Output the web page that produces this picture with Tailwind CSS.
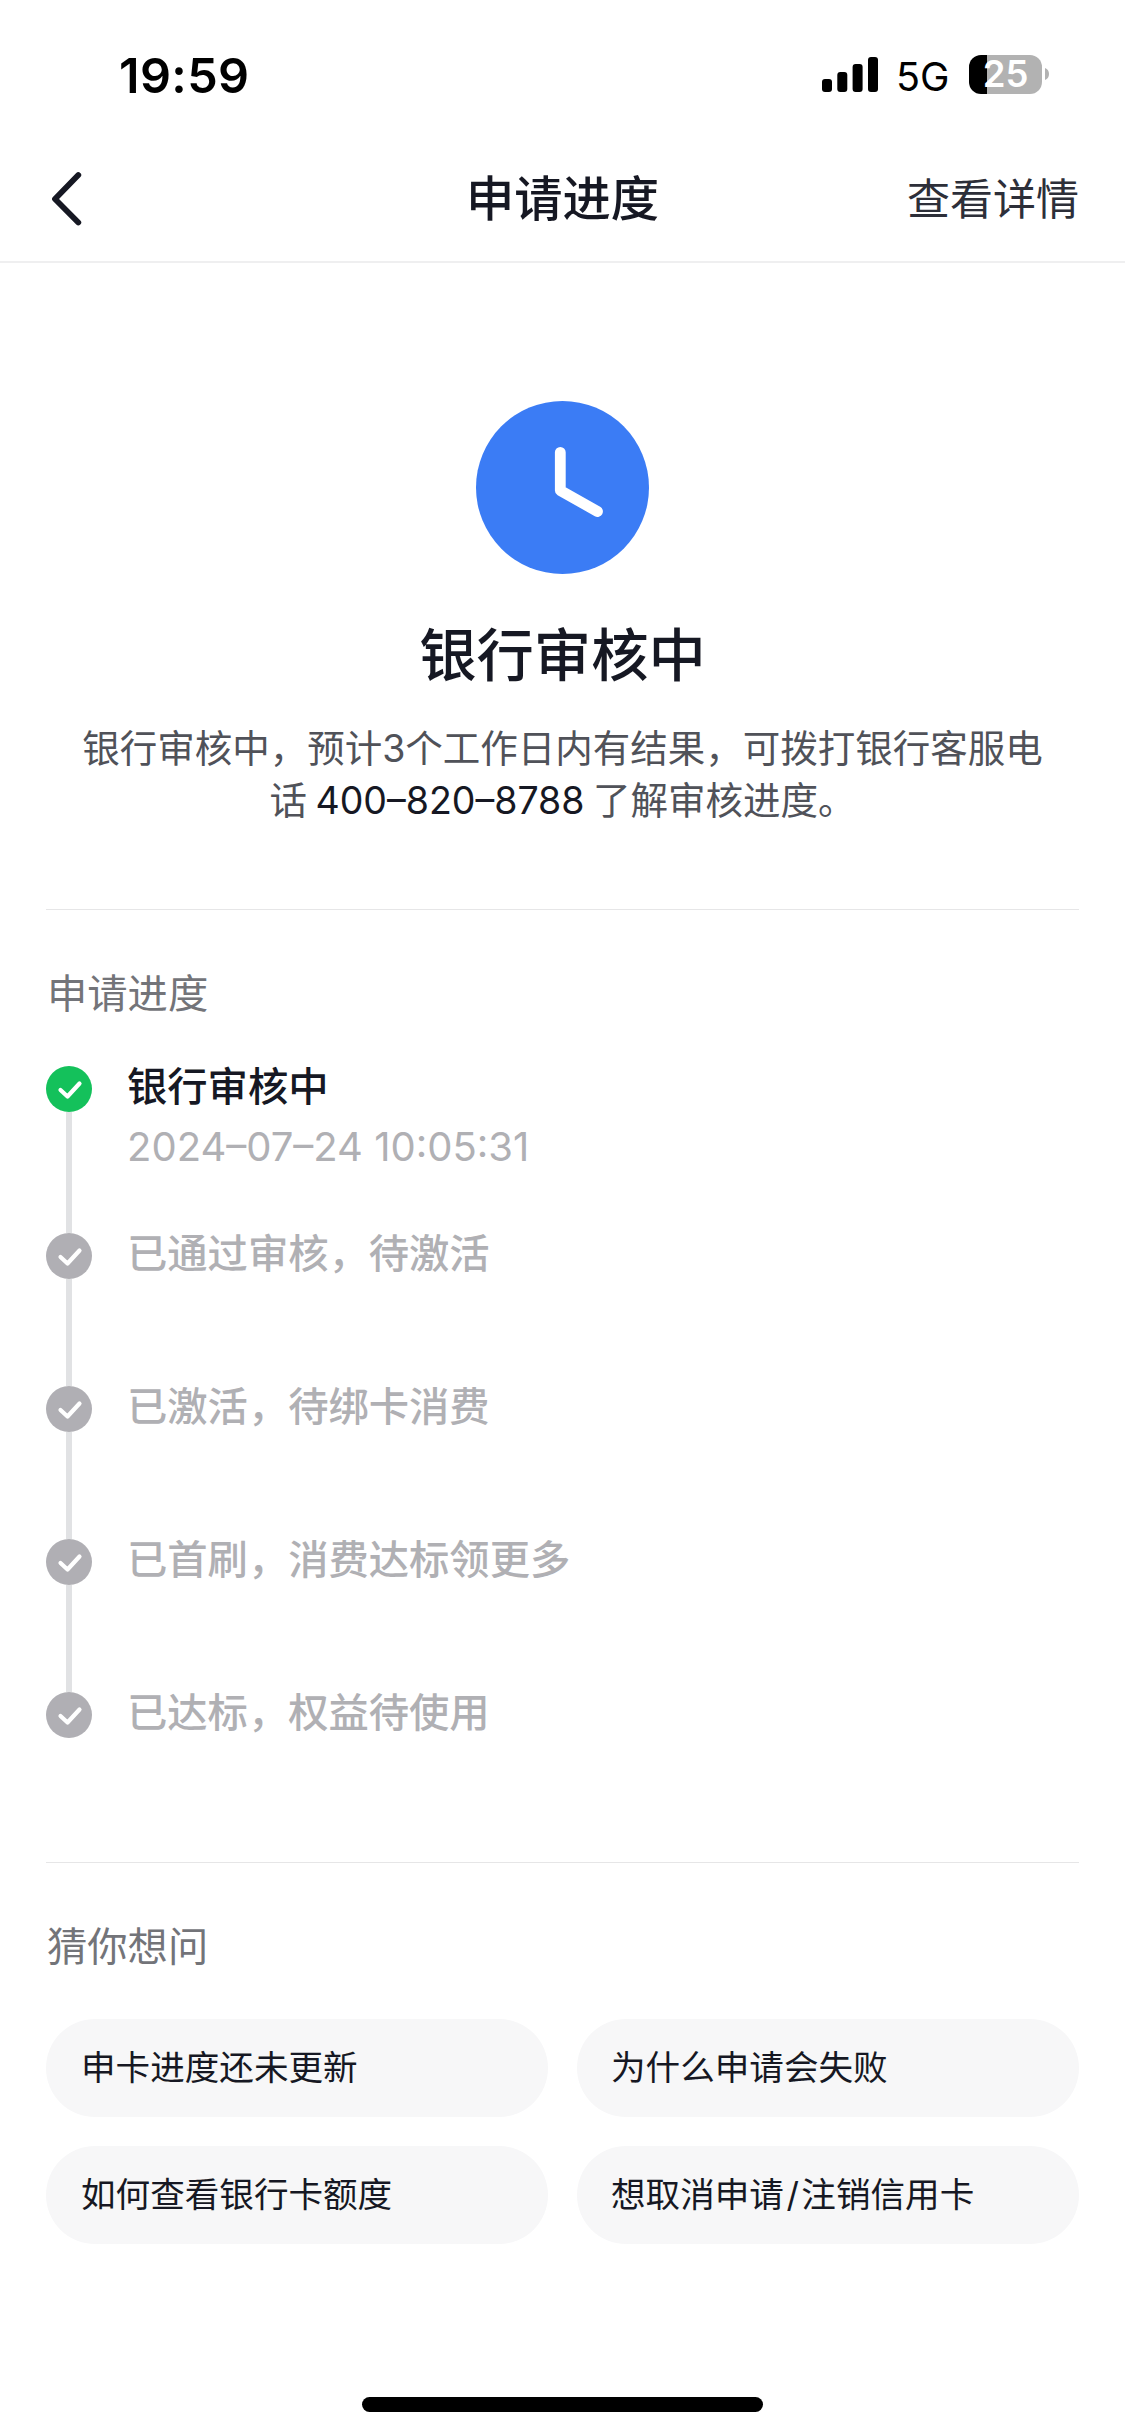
<!DOCTYPE html>
<html lang="zh-CN">
<head>
<meta charset="utf-8">
<title>申请进度</title>
<script src="https://cdn.jsdelivr.net/npm/@tailwindcss/browser@4"></script>
</head>
<body class="bg-white">
<svg class="hidden">
  <symbol id="check" viewBox="0 0 46 46"><path d="M14.5 24 21.5 30.5 33.5 17.5" fill="none" stroke="#fff" stroke-width="4.2" stroke-linecap="round" stroke-linejoin="round"/></symbol>
</svg>
<div class="flex h-[2435px] w-[1125px] flex-col overflow-hidden bg-white font-['Inter','Noto_Sans_CJK_SC',sans-serif] text-[#161823]">
  <!-- status bar -->
  <div class="flex h-[138px] items-start justify-between pl-[119px] pr-[76px] pt-[51px] text-black">
    <div class="text-[48.5px] font-semibold leading-[49px] tracking-[0.4px]">19:59</div>
    <div class="flex items-start pt-1">
      <svg class="mt-[2px] h-9 w-14" viewBox="0 0 56 36"><rect x="0" y="22" width="10" height="13" rx="3"/><rect x="15.3" y="15" width="10" height="20" rx="3"/><rect x="30.6" y="7" width="10" height="28" rx="3"/><rect x="46" y="0" width="10" height="35" rx="3"/></svg>
      <div class="ml-[18px] w-[73px] whitespace-nowrap text-[39.5px] leading-[44px]">5G</div>
      <div class="flex h-[39px] w-[73px] items-center justify-center rounded-[12px] bg-[linear-gradient(to_right,#000_18.5px,#b2b2b2_18.5px)] text-[36.5px] font-semibold leading-[39px] text-white">25</div>
      <svg class="ml-[3px] mt-[13px] h-3 w-1" viewBox="0 0 4 12"><path d="M0 0Q4 1.5 4 6T0 12Z" fill="#b2b2b2"/></svg>
    </div>
  </div>
  <!-- navigation -->
  <div class="grid h-[125px] grid-cols-3 items-center border-b-2 border-[#efeff0] pl-[46px] pr-[46px]">
    <svg class="ml-[3px] h-[60px] w-10" viewBox="0 0 40 60"><path d="M29.3 5 6 29 29.3 52.5" fill="none" stroke="#161823" stroke-width="5.8" stroke-linecap="round" stroke-linejoin="round"/></svg>
    <h1 class="text-center text-[48.3px] font-medium leading-none">申请进度</h1>
    <div class="text-right text-[43px] leading-none text-[#2d2f39]">查看详情</div>
  </div>
  <!-- current status -->
  <section class="mx-[46px] flex h-[647px] flex-col items-center border-b border-[#e6e6e7] pt-[138px] text-center">
    <svg class="h-[173px] w-[173px] shrink-0" viewBox="0 0 173 173"><circle cx="86.5" cy="86.5" r="86.5" fill="#3b7cf5"/><path d="M84.3 51.3V89.5L121.5 110.5" fill="none" stroke="#fff" stroke-width="10.8" stroke-linecap="round" stroke-linejoin="round"/></svg>
    <h2 class="mt-[53px] text-[57.3px] font-medium leading-[57px]">银行审核中</h2>
    <p class="mt-[39px] whitespace-nowrap text-[37.5px] leading-[52px] text-[#505259]">银行审核中，预计3个工作日内有结果，可拨打银行客服电<br><span class="[word-spacing:-2px]">话 <span class="text-[#161823]">400–820–8788</span> 了解审核进度。</span></p>
  </section>
  <!-- progress timeline -->
  <section class="mx-[46px] flex h-[953px] flex-col border-b border-[#e6e6e7] pt-[64px]">
    <h3 class="pl-px text-[40.3px] leading-[40px] text-[#737479]">申请进度</h3>
    <div class="mt-[52px] flex h-[167px] gap-[35px]">
      <div class="flex w-[46px] flex-col items-center"><svg class="h-[46px] w-[46px] shrink-0 rounded-full bg-[#14c15b]"><use href="#check"/></svg><div class="w-[6px] grow bg-[#e1e2e4]"></div></div>
      <div><div class="text-[40.3px] font-medium leading-[42px]">银行审核中</div><div class="mt-[17px] text-[40px] leading-[44px] text-[#b0b0b4]">2024–07–24 10:05:31</div></div>
    </div>
    <div class="flex h-[153px] gap-[35px]">
      <div class="flex w-[46px] flex-col items-center"><svg class="h-[46px] w-[46px] shrink-0 rounded-full bg-[#b0afb4]"><use href="#check"/></svg><div class="w-[6px] grow bg-[#e1e2e4]"></div></div>
      <div class="text-[40.3px] font-medium leading-[42px] text-[#b0b0b4]">已通过审核，待激活</div>
    </div>
    <div class="flex h-[153px] gap-[35px]">
      <div class="flex w-[46px] flex-col items-center"><svg class="h-[46px] w-[46px] shrink-0 rounded-full bg-[#b0afb4]"><use href="#check"/></svg><div class="w-[6px] grow bg-[#e1e2e4]"></div></div>
      <div class="text-[40.3px] font-medium leading-[42px] text-[#b0b0b4]">已激活，待绑卡消费</div>
    </div>
    <div class="flex h-[153px] gap-[35px]">
      <div class="flex w-[46px] flex-col items-center"><svg class="h-[46px] w-[46px] shrink-0 rounded-full bg-[#b0afb4]"><use href="#check"/></svg><div class="w-[6px] grow bg-[#e1e2e4]"></div></div>
      <div class="text-[40.3px] font-medium leading-[42px] text-[#b0b0b4]">已首刷，消费达标领更多</div>
    </div>
    <div class="flex gap-[35px]">
      <svg class="h-[46px] w-[46px] shrink-0 rounded-full bg-[#b0afb4]"><use href="#check"/></svg>
      <div class="text-[40.3px] font-medium leading-[42px] text-[#b0b0b4]">已达标，权益待使用</div>
    </div>
  </section>
  <!-- suggested questions -->
  <section class="mx-[46px] pt-[64px]">
    <h3 class="pl-px text-[40.3px] leading-[40px] text-[#737479]">猜你想问</h3>
    <div class="mt-[52px] grid grid-cols-2 gap-x-[29px] gap-y-[29px] text-[34.6px] leading-none">
      <div class="flex h-[98px] items-center rounded-full bg-[#f7f7f8] pb-[2px] pl-[35px]">申卡进度还未更新</div>
      <div class="flex h-[98px] items-center rounded-full bg-[#f7f7f8] pb-[2px] pl-[34px]">为什么申请会失败</div>
      <div class="flex h-[98px] items-center rounded-full bg-[#f7f7f8] pb-[2px] pl-[35px]">如何查看银行卡额度</div>
      <div class="flex h-[98px] items-center rounded-full bg-[#f7f7f8] pb-[2px] pl-[34px]">想取消申请<span class="px-[2.5px]">/</span>注销信用卡</div>
    </div>
  </section>
  <div class="mx-auto mb-[23px] mt-auto h-[15px] w-[401px] shrink-0 rounded-full bg-black"></div>
</div>
</body>
</html>
